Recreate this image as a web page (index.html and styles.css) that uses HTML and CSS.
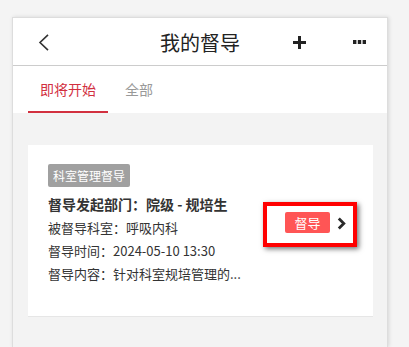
FILE: index.html
```html
<!DOCTYPE html>
<html lang="zh">
<head>
<meta charset="utf-8">
<link rel="stylesheet" href="styles.css">
</head>
<body>
<div class="panel">
  <div class="header">
    <div class="hd-left">
      <svg class="back" width="11" height="17" viewBox="0 0 11 17"><polyline points="10,0.8 2,8.5 10,16.2" fill="none" stroke="#333" stroke-width="1.6"/></svg>
    </div>
    <div class="title">我的督导</div>
    <div class="hd-right">
      <svg class="plus" width="13" height="13" viewBox="0 0 13 13"><rect x="5" y="0" width="3" height="13" fill="#222"/><rect x="0" y="5" width="13" height="3" fill="#222"/></svg>
      <svg class="dots" width="13" height="4" viewBox="0 0 13 4"><rect x="0" y="0" width="3.4" height="4" fill="#222"/><rect x="4.8" y="0" width="3.4" height="4" fill="#222"/><rect x="9.6" y="0" width="3.4" height="4" fill="#222"/></svg>
    </div>
  </div>
  <div class="tabs">
    <div class="tab active">即将开始</div>
    <div class="tab">全部</div>
  </div>
  <div class="content">
    <div class="card">
      <div class="info">
        <span class="tag">科室管理督导</span>
        <div class="name">督导发起部门：院级 - 规培生</div>
        <div class="line">被督导科室：呼吸内科</div>
        <div class="line">督导时间：2024-05-10 13:30</div>
        <div class="line">督导内容：针对科室规培管理的...</div>
      </div>
      <div class="action">
        <span class="btn">督导</span>
        <svg class="arrow" width="9" height="13" viewBox="0 0 9 13"><polyline points="1.8,1.5 6.8,6.5 1.8,11.5" fill="none" stroke="#2a2a2a" stroke-width="2.8"/></svg>
        <div class="highlight"></div>
      </div>
    </div>
  </div>
</div>
</body>
</html>
```

FILE: styles.css
```css
html, body {
  margin: 0;
  padding: 0;
  background: #f4f4f4;
  font-family: "Noto Sans CJK SC", "Noto Sans", sans-serif;
  color: #333;
}
.panel {
  margin: 17px 0 0 12px;
  width: 374px;
  height: 329px;
  background: #f3f3f3;
  border: 1px solid #dddddd;
  border-bottom: 0;
  box-shadow: 1px 0 4px rgba(0, 0, 0, 0.12);
}
.header {
  height: 47px;
  background: #fff;
  border-bottom: 1px solid #cccccc;
  display: grid;
  grid-template-columns: 1fr auto 1fr;
  align-items: center;
}
.hd-left {
  padding-left: 25px;
  display: flex;
  align-items: center;
}
.back { display: block; margin-top: 2px; }
.title {
  font-size: 20px;
  color: #222;
  line-height: 24px;
  margin-top: 3px;
}
.hd-right {
  display: flex;
  justify-content: flex-end;
  align-items: center;
  padding-right: 21px;
  gap: 47px;
}
.plus { display: block; margin-top: 1px; }
.dots { display: block; margin-top: 1px; }
.tabs {
  height: 47px;
  background: #fff;
  display: flex;
  padding-left: 15px;
  gap: 5px;
}
.tab {
  padding: 0 12px;
  font-size: 14px;
  line-height: 47px;
  color: #999;
  box-sizing: border-box;
  height: 47px;
}
.tab.active {
  color: #d2303f;
  border-bottom: 2px solid #d2303f;
  line-height: 47px;
}
.content {
  padding: 32px 14px 0 15px;
}
.card {
  background: #fff;
  border-bottom: 1px solid #e6e6e6;
  height: 172px;
  box-sizing: border-box;
  padding: 19px 27px 0 20px;
  display: flex;
  align-items: flex-start;
  justify-content: space-between;
}
.info { display: flex; flex-direction: column; align-items: flex-start; }
.tag {
  background: #a0a0a0;
  color: #fff;
  font-size: 12px;
  line-height: 23px;
  height: 23px;
  padding: 0 5px;
  border-radius: 2px;
}
.name {
  margin-top: 5px;
  font-size: 14px;
  font-weight: bold;
  line-height: 24px;
  color: #333;
}
.line {
  font-size: 13px;
  line-height: 23px;
  color: #333;
}
.action {
  position: relative;
  margin-top: 48px;
  display: flex;
  align-items: center;
  gap: 7px;
}
.btn {
  display: block;
  width: 45px;
  height: 21px;
  line-height: 21px;
  text-align: center;
  background: #ff5555;
  color: #fff;
  font-size: 13px;
  border-radius: 2px;
}
.arrow { display: block; margin-top: 2px; }
.highlight {
  position: absolute;
  left: -22px;
  top: -10px;
  width: 94px;
  height: 45px;
  box-sizing: border-box;
  border: 4px solid #ff0000;
  box-shadow: 2px 2px 5px rgba(0, 0, 0, 0.55);
}
```
